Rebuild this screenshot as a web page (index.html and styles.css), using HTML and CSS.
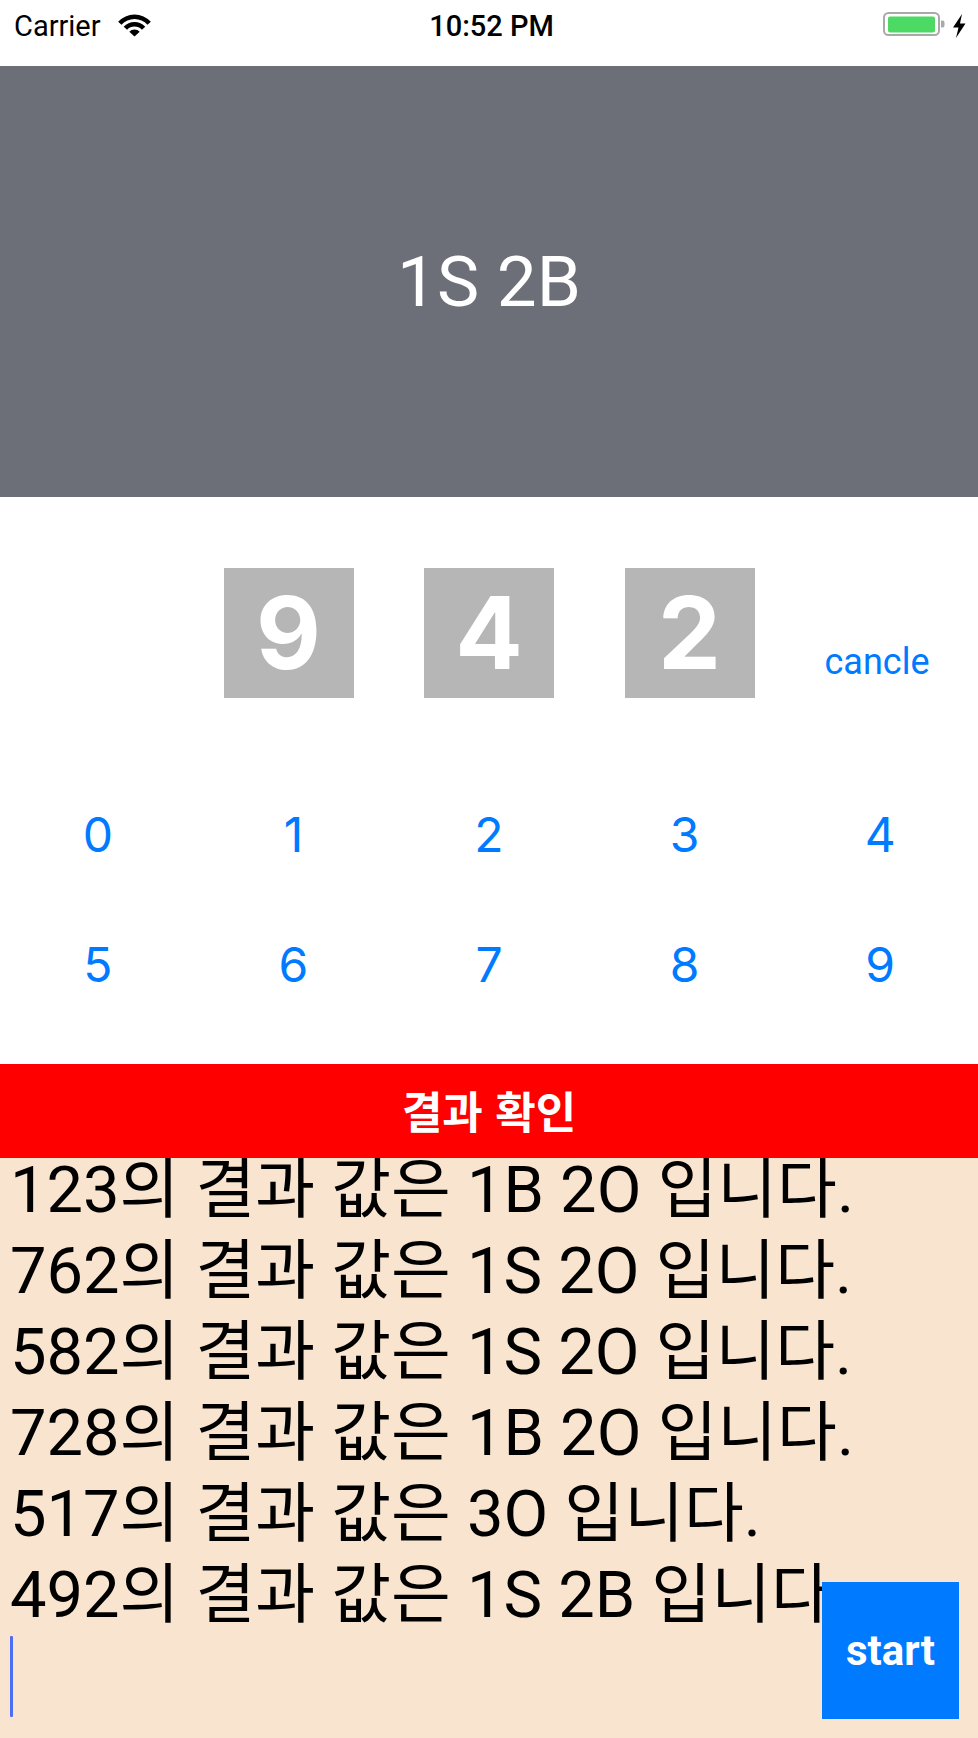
FILE: index.html
```html
<!DOCTYPE html>
<html lang="ko">
<head>
<meta charset="utf-8">
<title>Baseball</title>
<link rel="stylesheet" href="styles.css">
</head>
<body>
<div class="screen">
  <div class="status">
    <div class="st-left">
      <span class="carrier">Carrier</span>
      <svg class="wifi" width="33" height="23" viewBox="0 0 33 23">
        <path d="M0.15 7.78 A22 22 0 0 1 32.85 7.78 L29.5 10.79 A17.5 17.5 0 0 0 3.5 10.79 Z"/>
        <path d="M5.73 12.8 A14.5 14.5 0 0 1 27.27 12.8 L23.93 15.81 A10 10 0 0 0 9.07 15.81 Z"/>
        <path d="M11.3 17.82 A7 7 0 0 1 21.7 17.82 L16.5 22.5 Z"/>
      </svg>
    </div>
    <div class="time">10:52 PM</div>
    <div class="st-right">
      <svg class="battery" width="84" height="27" viewBox="0 0 84 27">
        <rect x="1" y="1" width="55" height="22" rx="4.5" fill="none" stroke="#a9a9a9" stroke-width="2"/>
        <rect x="5" y="4.5" width="47" height="16" rx="2" fill="#4cd964"/>
        <path d="M58 8.5 H59.5 A2 2 0 0 1 61.5 10.5 V13.5 A2 2 0 0 1 59.5 15.5 H58 Z" fill="#a9a9a9"/>
        <path d="M79 2 L70 15.5 H75.5 L73 26 L82.5 11.5 H77 Z" fill="#000"/>
      </svg>
    </div>
  </div>

  <div class="result-header">1S 2B</div>

  <div class="picker">
    <div class="slots">
      <div class="slots-side"></div>
      <div class="slot-group">
        <div class="slot">9</div>
        <div class="slot">4</div>
        <div class="slot">2</div>
      </div>
      <div class="slots-side">
        <button class="cancel">cancle</button>
      </div>
    </div>
    <div class="pad">
      <button class="key">0</button>
      <button class="key">1</button>
      <button class="key">2</button>
      <button class="key">3</button>
      <button class="key">4</button>
      <button class="key">5</button>
      <button class="key">6</button>
      <button class="key">7</button>
      <button class="key">8</button>
      <button class="key">9</button>
    </div>
  </div>

  <div class="confirm">결과 확인</div>

  <div class="log">
    <div class="log-text">
      <p class="line">123의 결과 값은 1B 2O 입니다.</p>
      <p class="line">762의 결과 값은 1S 2O 입니다.</p>
      <p class="line">582의 결과 값은 1S 2O 입니다.</p>
      <p class="line">728의 결과 값은 1B 2O 입니다.</p>
      <p class="line">517의 결과 값은 3O 입니다.</p>
      <p class="line">492의 결과 값은 1S 2B 입니다.</p>
      <span class="caret"></span>
    </div>
    <button class="start">start</button>
  </div>
</div>
</body>
</html>
```

FILE: styles.css
```css
* {
  box-sizing: border-box;
}

html, body {
  margin: 0;
  padding: 0;
  background: #ffffff;
}

body {
  font-family: Roboto, "Noto Sans CJK KR", sans-serif;
}

button {
  margin: 0;
  padding: 0;
  border: 0;
  background: none;
  font: inherit;
  color: inherit;
  cursor: pointer;
}

.screen {
  width: 978px;
  height: 1738px;
  display: flex;
  flex-direction: column;
  overflow: hidden;
}

/* Status bar */
.status {
  height: 66px;
  flex: 0 0 66px;
  padding: 2px 11px 17px 14px;
  display: grid;
  grid-template-columns: 1fr auto 1fr;
  align-items: center;
  background: #ffffff;
  color: #000;
}

.st-left {
  display: flex;
  align-items: center;
}

.carrier {
  font-size: 29px;
  font-weight: 400;
}

.wifi {
  margin-left: 17px;
  fill: #000;
}

.time {
  font-size: 29px;
  font-weight: 500;
  padding-left: 2px;
}

.st-right {
  display: flex;
  justify-content: flex-end;
  align-items: center;
}

/* Gray result header */
.result-header {
  flex: 0 0 431px;
  height: 431px;
  background: #6c6f77;
  color: #ffffff;
  display: flex;
  align-items: center;
  justify-content: center;
  font-family: Roboto, sans-serif;
  font-size: 71px;
  font-weight: 400;
}

/* Picker */
.picker {
  flex: 0 0 567px;
  height: 567px;
  padding-top: 71px;
  background: #ffffff;
  display: flex;
  flex-direction: column;
}

.slots {
  height: 130px;
  display: grid;
  grid-template-columns: 1fr auto 1fr;
}

.slot-group {
  display: flex;
  gap: 70.5px;
}

.slot {
  width: 130px;
  height: 130px;
  background: #b6b6b6;
  color: #ffffff;
  display: flex;
  align-items: center;
  justify-content: center;
  font-family: Inter, Roboto, sans-serif;
  font-weight: 700;
  font-size: 100px;
  line-height: 130px;
}

.cancel {
  margin-top: 74px;
  margin-left: 70px;
  font-family: Roboto, sans-serif;
  font-size: 36px;
  line-height: 40px;
  color: #007aff;
}

.pad {
  margin-top: 71.5px;
  display: grid;
  grid-template-columns: repeat(5, 1fr);
  grid-auto-rows: 130px;
}

.key {
  font-family: Inter, Roboto, sans-serif;
  font-size: 48px;
  line-height: 130px;
  color: #007aff;
  text-align: center;
}

/* Confirm bar */
.confirm {
  flex: 0 0 94px;
  height: 94px;
  background: #ff0000;
  color: #ffffff;
  display: flex;
  align-items: center;
  justify-content: center;
  padding-bottom: 3px;
  font-family: "Noto Sans CJK KR", sans-serif;
  font-weight: 700;
  font-size: 44px;
}

/* Log text view */
.log {
  flex: 1 1 auto;
  position: relative;
  background: #f9e5cf;
  overflow: hidden;
}

.log-text {
  margin-top: -8px;
  padding-left: 10px;
  font-family: Roboto, "Noto Sans CJK KR", sans-serif;
  font-size: 65px;
  line-height: 81px;
  color: #000000;
  white-space: nowrap;
}

.line {
  margin: 0;
}

.caret {
  display: block;
  width: 3px;
  height: 81px;
  background: #4b6ef5;
  border-radius: 1px;
}

.start {
  position: absolute;
  top: 424px;
  right: 19px;
  width: 137px;
  height: 137px;
  background: #007aff;
  color: #ffffff;
  font-family: Roboto, sans-serif;
  font-weight: 700;
  font-size: 42px;
}
```
